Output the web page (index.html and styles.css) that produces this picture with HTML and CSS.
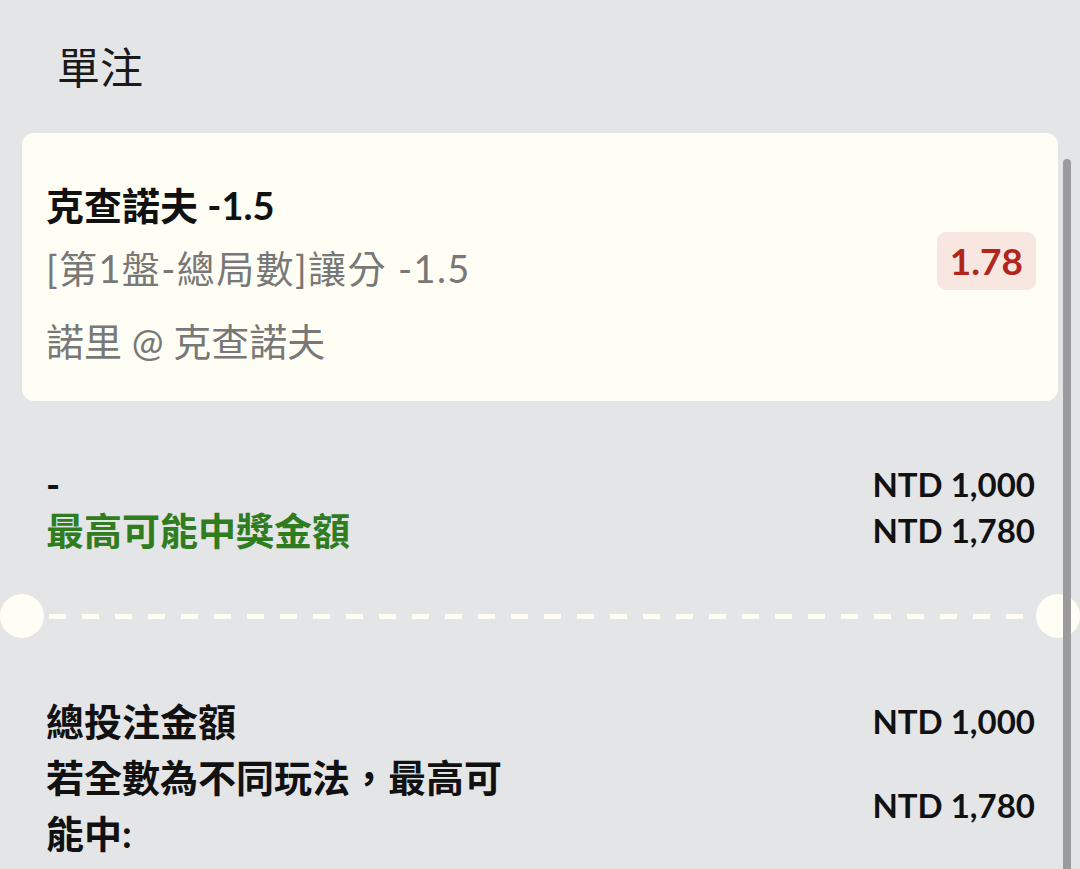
FILE: index.html
```html
<!DOCTYPE html>
<html lang="zh-TW">
<head>
  <meta charset="UTF-8">
  <meta name="viewport" content="width=device-width, initial-scale=1.0">
  <title>單注</title>
  <link rel="stylesheet" href="styles.css">
</head>
<body>
  <h1 class="title">單注</h1>

  <div class="card">
    <div class="info">
      <div class="pick">克查諾夫 -1.5</div>
      <div class="market">[第1盤-總局數]讓分 -1.5</div>
      <div class="match">諾里 @ 克查諾夫</div>
    </div>
    <div class="odds">1.78</div>
  </div>

  <div class="summary">
    <div class="row">
      <div class="label">-</div>
      <div class="amount">NTD 1,000</div>
    </div>
    <div class="row">
      <div class="label win">最高可能中獎金額</div>
      <div class="amount">NTD 1,780</div>
    </div>
  </div>

  <div class="divider">
    <div class="dash"></div>
  </div>

  <div class="totals">
    <div class="row">
      <div class="label">總投注金額</div>
      <div class="amount">NTD 1,000</div>
    </div>
    <div class="row">
      <div class="label wrap">若全數為不同玩法，最高可能中:</div>
      <div class="amount">NTD 1,780</div>
    </div>
  </div>

  <div class="scrollbar"></div>
</body>
</html>
```

FILE: styles.css
```css
* {
  margin: 0;
  padding: 0;
  box-sizing: border-box;
}
body {
  font-family: 'Lato', 'Noto Sans CJK TC', sans-serif;
  background: #e4e5e7;
  color: #111111;
  font-size: 38px;
  overflow: hidden;
  height: 869px;
}
.title {
  font-size: 43px;
  font-weight: 400;
  line-height: 60px;
  padding: 38px 0 0 57px;
  color: #1a1a1a;
}
.card {
  margin: 35px 22px 0;
  background: #fffef5;
  border-radius: 12px;
  padding: 43px 22px 31px 24px;
  display: flex;
  justify-content: space-between;
  align-items: flex-start;
}
.info > div {
  line-height: 58px;
  white-space: nowrap;
}
.pick {
  font-weight: 700;
}
.market {
  margin-top: 5px;
  color: #787878;
  letter-spacing: 1.4px;
}
.match {
  margin-top: 15px;
  color: #787878;
}
.odds {
  margin-top: 56px;
  height: 58px;
  line-height: 58px;
  padding: 0 13px;
  background: #f8e7e1;
  color: #b0261c;
  border-radius: 9px;
  font-size: 37px;
  font-weight: 700;
}
.summary {
  margin-top: 60px;
  padding: 0 45px 0 46px;
}
.summary .row {
  line-height: 46px;
}
.row {
  display: flex;
  justify-content: space-between;
  align-items: center;
  font-weight: 700;
}
.amount {
  font-size: 33px;
  white-space: nowrap;
}
.win {
  color: #2f7d1f;
}
.divider {
  position: relative;
  height: 44px;
  margin-top: 41px;
  display: flex;
  align-items: center;
}
.divider::before,
.divider::after {
  content: "";
  position: absolute;
  top: 0;
  width: 44px;
  height: 44px;
  border-radius: 50%;
  background: #fffef5;
}
.divider::before {
  left: 0;
}
.divider::after {
  right: 0;
}
.dash {
  flex: 1;
  margin: 0 49px;
  height: 5px;
  background: repeating-linear-gradient(to right, #fffef5 0 17px, transparent 17px 33px);
}
.totals {
  margin-top: 55px;
  padding: 0 45px 0 46px;
}
.totals .row {
  line-height: 56px;
}
.wrap {
  width: 480px;
}
.scrollbar {
  position: fixed;
  left: 1063px;
  top: 159px;
  bottom: 0;
  width: 8px;
  border-radius: 4px 4px 0 0;
  background: #9b9b9d;
}
```
